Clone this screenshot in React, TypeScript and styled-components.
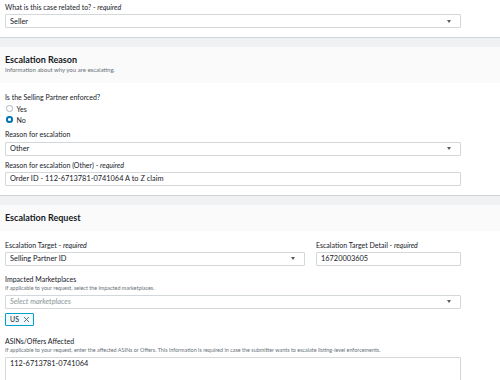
import React from "react";
import styled, { createGlobalStyle } from "styled-components";

const Global = createGlobalStyle`
  html, body { margin: 0; padding: 0; background: #ffffff; }
  body { font-family: Lato, "Open Sans", "Liberation Sans", sans-serif; color: #16191f; }
`;

const Page = styled.div`
  width: 500px;
  height: 380px;
  overflow: hidden;
  background: #ffffff;
`;

const Body = styled.div<{ $pt?: number; $pb?: number }>`
  padding: ${(p) => p.$pt ?? 0}px 39px ${(p) => p.$pb ?? 0}px 5px;
  display: flex;
  flex-direction: column;
`;

const Divider = styled.div`
  border-top: 1.5px solid #cfd4d6;
  height: 9px;
  background: #f0f1f2;
`;

const Header = styled.div`
  background: #fafafa;
  padding: 7px 5px 7px;
`;

const Title = styled.div`
  font-size: 9px;
  line-height: 12px;
  font-weight: 700;
  color: #16191f;
`;

const Description = styled.div`
  font-size: 6px;
  line-height: 8px;
  color: #687078;
  margin-bottom: 2px;
`;

const Label = styled.div<{ $mt?: number; $mb?: number; $lh?: number }>`
  font-size: 7px;
  line-height: ${(p) => p.$lh ?? 10}px;
  margin-top: ${(p) => p.$mt ?? 0}px;
  margin-bottom: ${(p) => p.$mb ?? (p.$lh === 9 ? 0 : 2)}px;
  color: #16191f;
  i { font-style: italic; color: #16191f; }
`;

const Hint = styled.div`
  font-size: 5.45px;
  line-height: 8px;
  color: #687078;
  margin-bottom: 2.5px;
  white-space: nowrap;
`;

const Box = styled.div<{ $h?: number }>`
  box-sizing: border-box;
  height: ${(p) => p.$h ?? 14}px;
  border: 1px solid #d3d8da;
  border-radius: 1px;
  background: #fff;
  display: flex;
  align-items: ${(p) => (p.$h ? "flex-start" : "center")};
  padding: ${(p) => (p.$h ? "1.5px" : "0")} 9px 0 4px;
  font-size: 7.4px;
  color: #16191f;
`;

const BoxText = styled.span<{ $placeholder?: boolean }>`
  flex: 1;
  white-space: nowrap;
  font-style: ${(p) => (p.$placeholder ? "italic" : "normal")};
  color: ${(p) => (p.$placeholder ? "#879596" : "#16191f")};
`;

const Caret = styled.span`
  width: 0;
  height: 0;
  border-left: 2.5px solid transparent;
  border-right: 2.5px solid transparent;
  border-top: 3.5px solid #545b64;
`;

const RadioRow = styled.label`
  display: flex;
  align-items: center;
  height: 11px;
  font-size: 7px;
  padding-left: 1px;
  gap: 3px;
`;

const RadioDot = styled.span<{ $on?: boolean }>`
  box-sizing: border-box;
  width: 6.5px;
  height: 6.5px;
  border-radius: 50%;
  border: ${(p) => (p.$on ? "2px solid #0073bb" : "1px solid #aab7b8")};
  background: #fff;
  margin-right: 1px;
`;

const Row = styled.div`
  display: grid;
  grid-template-columns: 300px 1fr;
  gap: 11px;
`;

const Field = styled.div`
  display: flex;
  flex-direction: column;
`;

const Token = styled.div`
  align-self: flex-start;
  box-sizing: border-box;
  height: 13px;
  margin-top: 4px;
  padding: 0 3px 0 4px;
  border: 1px solid #00a1c9;
  border-radius: 1px;
  background: #f1faff;
  display: flex;
  align-items: center;
  gap: 4px;
  font-size: 7px;
  color: #16191f;
`;

function Select({ value, placeholder }: { value: string; placeholder?: boolean }) {
  return (
    <Box>
      <BoxText $placeholder={placeholder}>{value}</BoxText>
      <Caret />
    </Box>
  );
}

function Input({ value }: { value: string }) {
  return (
    <Box>
      <BoxText>{value}</BoxText>
    </Box>
  );
}

function Req() {
  return (
    <>
      {" - "}
      <i>required</i>
    </>
  );
}

export default function App() {
  return (
    <Page>
      <Global />
      <Body $pt={2} $pb={9}>
        <Label>
          What is this case related to?<Req />
        </Label>
        <Select value="Seller" />
      </Body>
      <Divider />
      <Header>
        <Title>Escalation Reason</Title>
        <Description>Information about why you are escalating.</Description>
      </Header>
      <Body $pt={8.5} $pb={9}>
        <Label $mb={1.5}>Is the Selling Partner enforced?</Label>
        <RadioRow>
          <RadioDot />
          Yes
        </RadioRow>
        <RadioRow>
          <RadioDot $on />
          No
        </RadioRow>
        <Label $mt={4} $mb={2.5}>Reason for escalation</Label>
        <Select value="Other" />
        <Label $mt={4}>
          Reason for escalation (Other)<Req />
        </Label>
        <Input value="Order ID - 112-6713781-0741064 A to Z claim" />
      </Body>
      <Divider />
      <Header>
        <Title>Escalation Request</Title>
      </Header>
      <Body $pt={9}>
        <Row>
          <Field>
            <Label>
              Escalation Target<Req />
            </Label>
            <Select value="Selling Partner ID" />
          </Field>
          <Field>
            <Label>
              Escalation Target Detail<Req />
            </Label>
            <Input value="16720003605" />
          </Field>
        </Row>
        <Label $mt={9.5} $lh={9}>Impacted Marketplaces</Label>
        <Hint>If applicable to your request, select the impacted marketplaces.</Hint>
        <Select value="Select marketplaces" placeholder />
        <Token>
          US
          <svg width="7" height="7" viewBox="0 0 10 10">
            <path d="M1.5 1.5 L8.5 8.5 M8.5 1.5 L1.5 8.5" stroke="#545b64" strokeWidth="1.3" fill="none" />
          </svg>
        </Token>
        <Label $mt={11.5} $lh={9}>ASINs/Offers Affected</Label>
        <Hint>
          If applicable to your request, enter the affected ASINs or Offers. This information is required in case the submitter wants to escalate listing-level enforcements.
        </Hint>
        <Box $h={40}>
          <BoxText>112-6713781-0741064</BoxText>
        </Box>
      </Body>
    </Page>
  );
}
